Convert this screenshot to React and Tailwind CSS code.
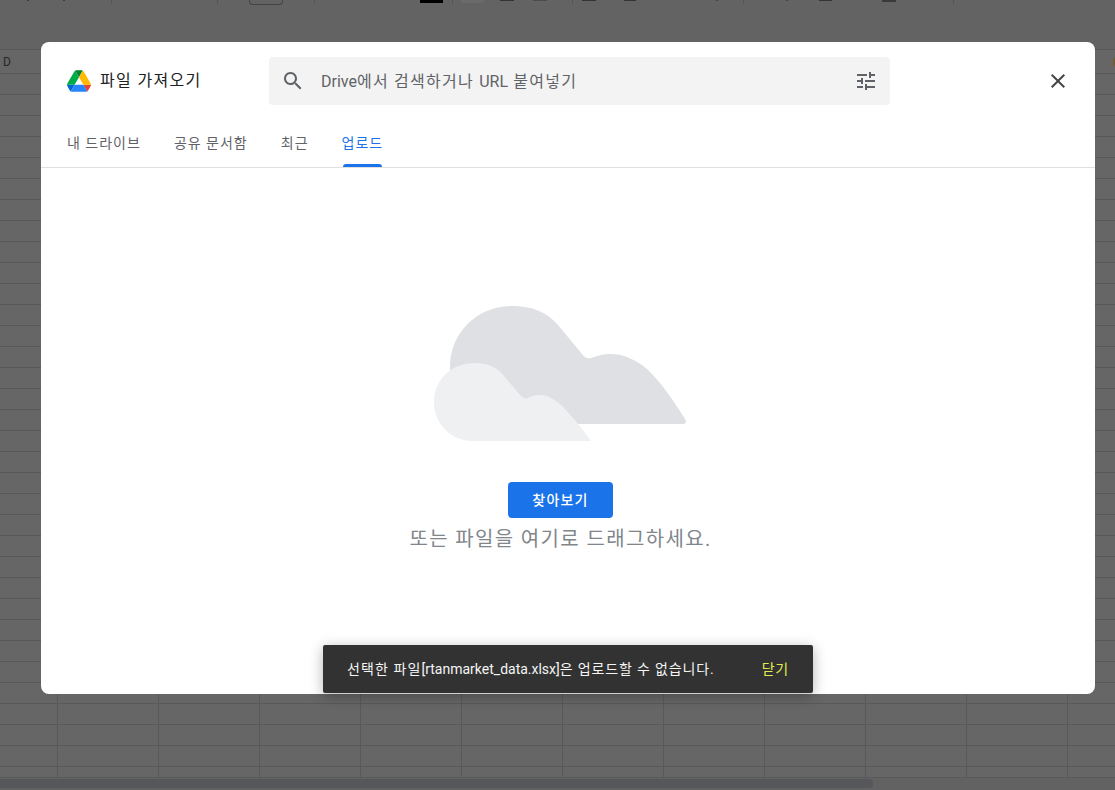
import React from 'react'

const rowCount = Array.from({ length: 34 })
const colCount = Array.from({ length: 10 })

function DriveLogo() {
  return (
    <svg viewBox="0 0 87.3 78" className="w-[24px] h-[22px] shrink-0">
      <path d="m6.6 66.85 3.85 6.65c.8 1.4 1.95 2.5 3.3 3.3l13.75-23.8h-27.5c0 1.55.4 3.1 1.2 4.5z" fill="#0066da" />
      <path d="m43.65 25-13.75-23.8c-1.35.8-2.5 1.9-3.3 3.3l-25.4 44a9.06 9.06 0 0 0 -1.2 4.5h27.5z" fill="#00ac47" />
      <path d="m73.55 76.8c1.35-.8 2.5-1.9 3.3-3.3l1.6-2.75 7.65-13.25c.8-1.4 1.2-2.95 1.2-4.5h-27.502l5.852 11.5z" fill="#ea4335" />
      <path d="m43.65 25 13.75-23.8c-1.35-.8-2.9-1.2-4.5-1.2h-18.5c-1.6 0-3.15.45-4.5 1.2z" fill="#00832d" />
      <path d="m59.8 53h-32.3l-13.75 23.8c1.35.8 2.9 1.2 4.5 1.2h50.8c1.6 0 3.15-.45 4.5-1.2z" fill="#2684fc" />
      <path d="m73.4 26.5-12.7-22c-.8-1.4-1.95-2.5-3.3-3.3l-13.75 23.8 16.15 28h27.45c0-1.55-.4-3.1-1.2-4.5z" fill="#ffba00" />
    </svg>
  )
}

function Clouds() {
  return (
    <svg viewBox="432 305 257 137" className="w-[257px] h-[137px]">
      <path
        d="M510 424 C474 424 450 398 450 367 C450 333 477 306 512 306 C532 306 547 312 558 325 L582 354 C585 358 587 359 591 358 C597 356 603 354 610 354 C624 354 636 360 647 369 C659 380 672 398 685 419 C687 422 686 424 682 424 Z"
        fill="#dfe0e4"
      />
      <path
        d="M473 441 C451 441 434 424 434 402 C434 380 451 363 475 363 C487 363 497 367 504 376 L520 395 C523 398 525 399 528 398 C532 396 536 395 540 395 C548 395 554 399 561 405 C569 413 578 423 591 441 Z"
        fill="#eff0f2"
      />
    </svg>
  )
}

function Toolbar() {
  return (
    <div className="h-[50px] shrink-0 bg-[#636364] border-b border-[#595959] flex items-start">
      <div className="ml-[27px] w-[2px] h-[1px] bg-[#3c3c3c]" />
      <div className="ml-[34px] w-[2px] h-[1px] bg-[#3c3c3c]" />
      <div className="ml-[46px] w-[1px] h-[4px] bg-[#545454]" />
      <div className="ml-[105px] w-[1px] h-[4px] bg-[#545454]" />
      <div className="ml-[31px] w-[34px] h-[5px] rounded-b border border-t-0 border-[#444444]" />
      <div className="ml-[31px] w-[1px] h-[4px] bg-[#545454]" />
      <div className="ml-[105px] w-[23px] h-[3px] bg-black" />
      <div className="ml-[9px] w-[1px] h-[4px] bg-[#545454]" />
      <div className="ml-[8px] w-[23px] h-[3px] bg-[#6a6a6a]" />
      <div className="ml-[16px] w-[14px] h-[1px] bg-[#333333]" />
      <div className="ml-[19px] w-[14px] h-[1px] bg-[#4c4c4c]" />
      <div className="ml-[25px] w-[1px] h-[4px] bg-[#545454]" />
      <div className="ml-[9px] w-[14px] h-[1px] bg-[#333333]" />
      <div className="ml-[28px] w-[12px] h-[1px] bg-[#333333]" />
      <div className="ml-[80px] w-[2px] h-[1px] bg-[#444444]" />
      <div className="ml-[25px] w-[1px] h-[4px] bg-[#545454]" />
      <div className="ml-[42px] w-[2px] h-[1px] bg-[#444444]" />
      <div className="ml-[31px] w-[13px] h-[1px] bg-[#333333]" />
      <div className="ml-[50px] w-[14px] h-[2px] bg-[#3a3a3a]" />
      <div className="ml-[57px] w-[1px] h-[4px] bg-[#545454]" />
    </div>
  )
}

function Sheet() {
  return (
    <div className="h-[790px] flex flex-col bg-[#666666]">
      <Toolbar />
      <div className="h-[24px] shrink-0 border-b border-[#595959] flex items-center justify-between pl-[3px] text-xs text-[#262626]">
        <span>D</span>
        <span className="w-[2px] h-[8px] bg-[#6f5a3a]" />
      </div>
      <div className="h-[704px] shrink-0 overflow-hidden border-b border-[#595959]">
        {rowCount.map((_, r) => (
          <div key={r} className="h-[21px] flex border-b border-[#595959]">
            <div className="w-[58px] shrink-0 border-r border-[#595959]" />
            {colCount.map((_, c) => (
              <div key={c} className="w-[101px] shrink-0 border-r border-[#595959]" />
            ))}
          </div>
        ))}
      </div>
      <div className="h-[12px] shrink-0 bg-[#626262] py-[1px]">
        <div className="w-[873px] h-[9px] bg-[#56575a] rounded-r" />
      </div>
    </div>
  )
}

export default function App() {
  return (
    <div className="relative w-[1115px] h-[790px] overflow-hidden [font-family:Roboto,'Noto_Sans_CJK_KR',sans-serif]">
      <Sheet />

      <div className="absolute left-[41px] top-[42px] w-[1054px] h-[652px] bg-white rounded-lg flex flex-col">
        <div className="h-[80px] shrink-0 flex items-start pt-[15px] pl-[26px]">
          <div className="w-[202px] h-[48px] shrink-0 flex items-center gap-[9px]">
            <DriveLogo />
            <span className="text-base tracking-[1.33px] text-[#202124]">파일 가져오기</span>
          </div>
          <div className="w-[621px] h-[48px] shrink-0 flex items-center bg-[#f3f3f3] rounded pl-[12px] pr-[12px]">
            <svg viewBox="0 0 24 24" className="w-[24px] h-[24px] shrink-0" fill="#5f6368">
              <path d="M15.5 14h-.79l-.28-.27C15.41 12.59 16 11.11 16 9.5 16 5.91 13.09 3 9.5 3S3 5.91 3 9.5 5.91 16 9.5 16c1.61 0 3.09-.59 4.23-1.57l.27.28v.79l5 4.99L20.49 19l-4.99-5zm-6 0C7.01 14 5 11.99 5 9.5S7.01 5 9.5 5 14 7.01 14 9.5 11.99 14 9.5 14z" />
            </svg>
            <span className="ml-[16px] mt-[2px] text-base text-[#5f6368]">
              Drive<span className="tracking-[1.25px]">에서 검색하거나 </span>URL<span className="tracking-[1.25px]"> 붙여넣기</span>
            </span>
            <svg viewBox="0 0 24 24" className="ml-auto w-[24px] h-[24px] shrink-0" fill="#5f6368">
              <path d="M3 17v2h6v-2H3zM3 5v2h10V5H3zm10 16v-2h8v-2h-8v-2h-2v6h2zM7 9v2H3v2h4v2h2V9H7zm14 4v-2H11v2h10zm-6-4h2V7h4V5h-4V3h-2v6z" />
            </svg>
          </div>
          <div className="ml-[156px] h-[48px] flex items-center">
            <svg viewBox="0 0 24 24" className="w-[24px] h-[24px]" fill="#444746">
              <path d="M19 6.41 17.59 5 12 10.59 6.41 5 5 6.41 10.59 12 5 17.59 6.41 19 12 13.41 17.59 19 19 17.59 13.41 12z" />
            </svg>
          </div>
        </div>

        <div className="h-[46px] shrink-0 flex gap-[33px] pl-[26px] border-b border-[#e0e0e0] text-sm tracking-[1px] text-[#5f6368]">
          <div className="pt-[11px]">내 드라이브</div>
          <div className="pt-[11px]">공유 문서함</div>
          <div className="pt-[11px]">최근</div>
          <div className="relative pt-[11px] text-[#1a73e8]">
            업로드
            <div className="absolute left-[1px] right-[1px] bottom-0 h-[3px] bg-[#1a73e8] rounded-t" />
          </div>
        </div>

        <div className="flex-1 flex flex-col items-center pr-[15px] pt-[137px]">
          <Clouds />
          <button className="mt-[40px] w-[105px] h-[36px] bg-[#1a73e8] rounded text-sm font-medium tracking-[1.2px] text-white">찾아보기</button>
          <div className="mt-[8px] text-xl leading-[26px] tracking-[1.35px] text-[#80868b]">또는 파일을 여기로 드래그하세요.</div>
        </div>
      </div>

      <div className="absolute left-[323px] top-[645px] w-[490px] h-[48px] bg-[#323232] rounded-[2px] shadow-[0_3px_14px_rgba(0,0,0,0.3)] flex items-center justify-between pl-[24px] pr-[24px] text-sm">
        <span className="text-[#f5f5f5]">
          <span className="tracking-[1.1px]">선택한 파일</span>[rtanmarket_data.xlsx]<span className="tracking-[0.85px]">은 업로드할 수 없습니다.</span>
        </span>
        <span className="tracking-[0.8px] text-[#e3ec4f]">닫기</span>
      </div>
    </div>
  )
}
